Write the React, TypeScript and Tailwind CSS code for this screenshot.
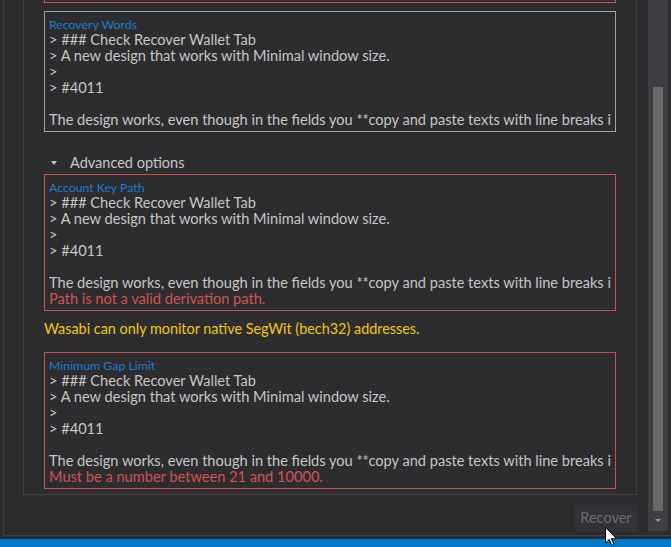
const sample = [
  "> ### Check Recover Wallet Tab",
  "> A new design that works with Minimal window size.",
  ">",
  "> #4011",
  "",
  "The design works, even though in the fields you **copy and paste texts with line breaks in them the boxes grow.",
];

function Field({ label, error, tone }: { label: string; error?: string; tone: "red" | "grey" }) {
  return (
    <div
      className={
        "border px-[4px] pt-[5px] pb-[3px] " +
        (tone === "red" ? "border-[#c75050]" : "border-[#a3a3a3]")
      }
    >
      <div className="overflow-hidden">
        <div className="text-[12.3px] leading-[15px] text-[#1a7dd0]">{label}</div>
        {sample.map((line, i) => (
          <div key={i} className="h-[16px] text-[14.6px] leading-[16px] text-[#c6c6c6] whitespace-nowrap">
            {line}
          </div>
        ))}
        {error && <div className="h-[16px] text-[14.6px] leading-[16px] text-[#d35252] whitespace-nowrap">{error}</div>}
      </div>
    </div>
  );
}

function Cursor() {
  return (
    <svg className="absolute left-[605px] top-[527px]" width="13" height="20" viewBox="0 0 13 20">
      <path d="M0.5 0.5 L0.5 16 L4.2 12.5 L6.8 18.5 L9 17.5 L6.5 11.7 L11.5 11.7 Z" fill="#ffffff" stroke="#000000" strokeWidth="1" />
    </svg>
  );
}

export default function App() {
  return (
    <div
      className="relative w-[671px] h-[547px] overflow-hidden bg-[#2d2d30] flex flex-col"
      style={{ fontFamily: "Lato, 'Noto Sans', sans-serif" }}
    >
      <div className="h-[539px] pl-[3px]">
        <div className="h-[536px] border-l border-b border-[#3f3f46] flex pb-[4px]">
          <div className="w-[643px] flex flex-col pl-[19px]">
            {/* form panel, scrolled so its top is out of view */}
            <div className="w-[614px] h-[495px] border-x border-b border-[#3f3f46] overflow-hidden px-[20px] pb-[5px] flex flex-col justify-end">
              <div className="flex flex-col">
                {/* previous field, only its bottom edge is in view */}
                <div className="h-[137px] border border-[#c75050]" />
                <div className="mt-[8px]">
                  <Field label="Recovery Words" tone="grey" />
                </div>
                <div className="mt-[21px] h-[20px] flex items-center text-[14.5px] text-[#c8c8c8]">
                  <span className="ml-[7px] mr-[13px] w-0 h-0 border-l-[3px] border-r-[3px] border-t-[4px] border-l-transparent border-r-transparent border-t-[#c8c8c8]" />
                  Advanced options
                </div>
                <div className="mt-[1px]">
                  <Field label="Account Key Path" error="Path is not a valid derivation path." tone="red" />
                </div>
                <div className="mt-[9px] h-[18px] leading-[18px] text-[14.4px] text-[#f2c811]">
                  Wasabi can only monitor native SegWit (bech32) addresses.
                </div>
                <div className="mt-[14px]">
                  <Field label="Minimum Gap Limit" error="Must be a number between 21 and 10000." tone="red" />
                </div>
              </div>
            </div>
            <div className="flex justify-end pt-[10px] w-[614px]">
              <div className="w-[62px] h-[26px] bg-[#333337] text-[#6d6d6d] text-[14.5px] flex items-center justify-center">
                Recover
              </div>
            </div>
          </div>
          {/* scrollbar */}
          <div className="w-[20px] ml-[1px] h-[531px] bg-[#3e3e42] flex flex-col items-center">
            <div className="mt-[87px] w-[10px] h-[424px] bg-[#686868]" />
            <div className="mt-[8px] w-0 h-0 border-l-[3px] border-r-[3px] border-t-[3px] border-l-transparent border-r-transparent border-t-[#9a9a9a]" />
          </div>
        </div>
      </div>
      <div className="flex-1 bg-[#007acc]" />
      <Cursor />
    </div>
  );
}
